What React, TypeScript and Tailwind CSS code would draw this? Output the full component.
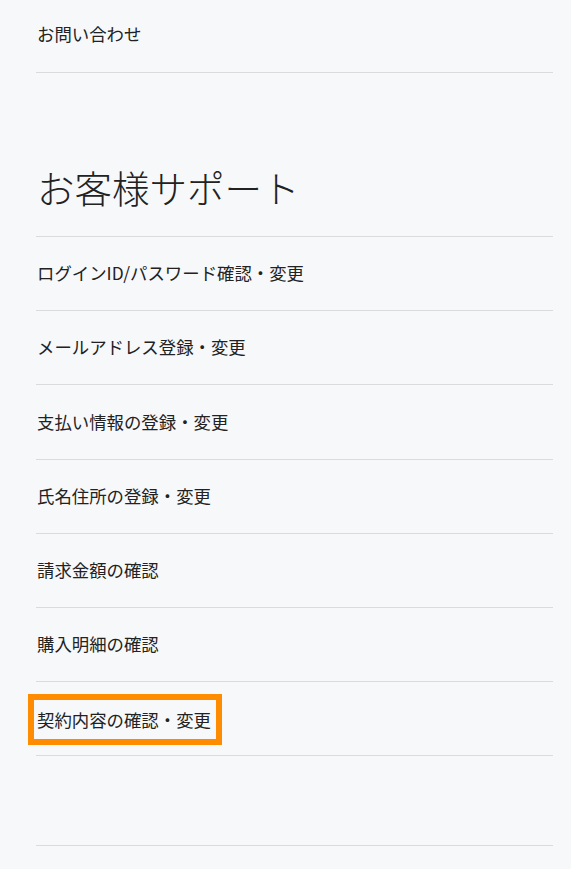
import React from "react";

const items = [
  "ログインID/パスワード確認・変更",
  "メールアドレス登録・変更",
  "支払い情報の登録・変更",
  "氏名住所の登録・変更",
  "請求金額の確認",
  "購入明細の確認",
];

export default function App() {
  return (
    <div
      className="min-h-[869px] w-full bg-[#f7f8fa] text-[#222222]"
      style={{ fontFamily: '"Noto Sans CJK JP", "Noto Sans", sans-serif' }}
    >
      <div className="ml-[36px] w-[517px]">
        <div className="flex h-[73px] items-center border-b border-[#dadbdd] pb-[3px] text-[17.4px]">
          <span className="ml-[1px]">お問い合わせ</span>
        </div>
        <div className="flex h-[164px] items-end border-b border-[#dadbdd] pb-[21px]">
          <h2 className="ml-[1px] text-[37.5px] leading-[56px] font-light">お客様サポート</h2>
        </div>
        {items.map((t, i) => (
          <div
            key={t}
            className={
              i === 2
                ? "flex h-[75px] items-center border-b border-[#dadbdd] text-[17.4px]"
                : "flex h-[74px] items-center border-b border-[#dadbdd] text-[17.4px]"
            }
          >
            <span className="ml-[1px]">{t}</span>
          </div>
        ))}
        <div className="flex h-[74px] items-center border-b border-[#dadbdd] text-[17.4px]">
          <span className="-ml-[8px] mt-[2px] inline-block border-[6px] border-[#ff8c00] py-[6px] pl-[3px] pr-[5px] leading-[27px]">
            契約内容の確認・変更
          </span>
        </div>
        <div className="mt-[89px] border-t border-[#dadbdd]" />
      </div>
    </div>
  );
}
